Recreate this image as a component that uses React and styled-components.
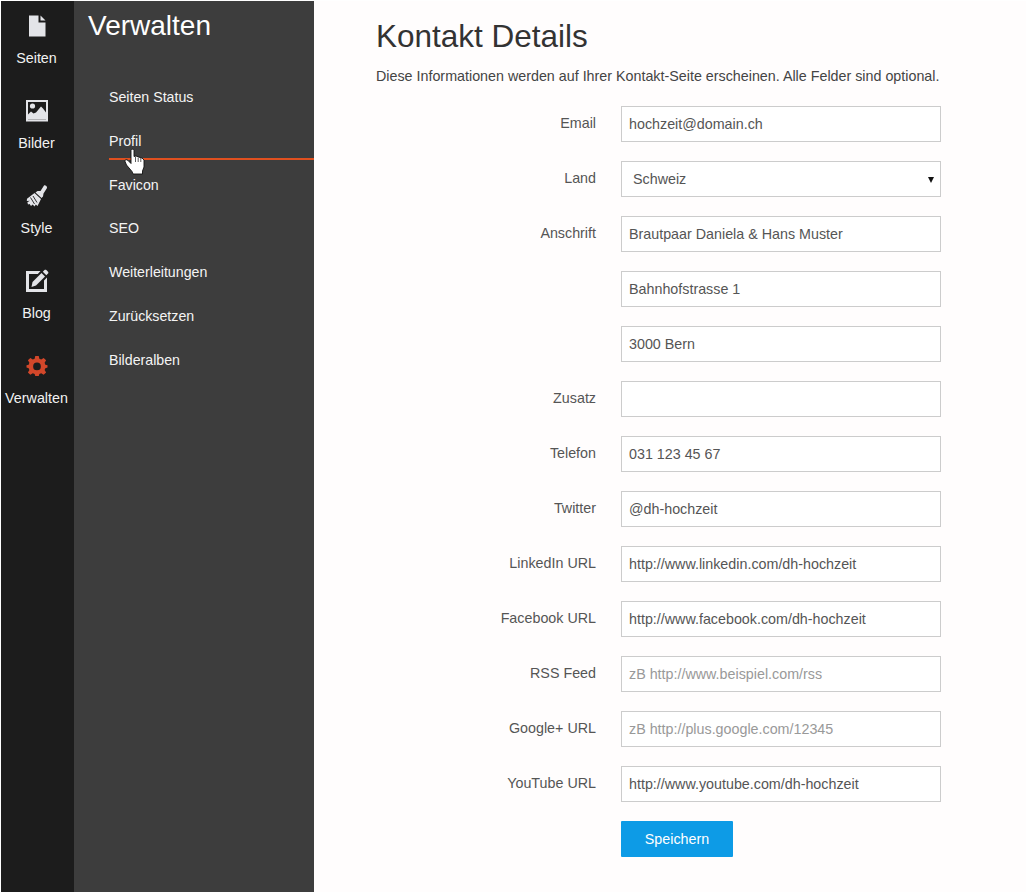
import React from 'react';
import styled, { createGlobalStyle } from 'styled-components';

const Global = createGlobalStyle`
  html, body {
    margin: 0;
    padding: 0;
    background: #fff;
  }
  body {
    font-family: "Liberation Sans", Arial, sans-serif;
  }
`;

const Page = styled.div`
  display: flex;
  height: 891px;
  padding: 1px 0 1px 1px;
  overflow: hidden;
`;

const IconBar = styled.nav`
  width: 73px;
  flex: none;
  box-sizing: border-box;
  padding-right: 2px;
  background: #1c1c1c;
  display: flex;
  flex-direction: column;
`;

const IconItem = styled.a`
  height: 85px;
  display: flex;
  flex-direction: column;
  align-items: center;
  padding-top: 13px;
  box-sizing: border-box;
  color: #f2f2f2;
  font-size: 14.3px;
  line-height: 16px;
  svg {
    display: block;
    width: 24px;
    height: 24px;
    margin-bottom: 12px;
    color: ${({ $active }) => ($active ? '#d2472a' : '#e3e4e8')};
  }
`;

const SubPanel = styled.aside`
  width: 240px;
  flex: none;
  background: #3d3d3d;
  color: #fff;
`;

const SubTitle = styled.h2`
  margin: 0;
  padding: 9px 0 0 14px;
  font-size: 28px;
  font-weight: 400;
  line-height: 32px;
`;

const SubList = styled.ul`
  list-style: none;
  margin: 33px 0 0;
  padding: 0 0 0 35px;
`;

const SubItem = styled.li`
  position: relative;
  height: 43.8px;
  line-height: 44px;
  font-size: 14.2px;
  color: #f4f4f4;
  ${({ $active }) =>
    $active &&
    `
    &::after {
      content: "";
      position: absolute;
      left: 0;
      right: 0;
      bottom: 3px;
      height: 2px;
      background: #e0501f;
    }
  `}
`;

const HandCursor = styled.svg`
  position: absolute;
  left: 15px;
  top: 29px;
  width: 21px;
  height: 27px;
  z-index: 1;
`;

const Main = styled.main`
  flex: 1;
  background: #fffdfd;
  padding: 15px 0 0 62px;
  color: #555;
`;

const Title = styled.h1`
  margin: 0;
  font-size: 31.5px;
  font-weight: 400;
  line-height: 40px;
  color: #333;
`;

const Intro = styled.p`
  margin: 10px 0 0;
  font-size: 14.3px;
  line-height: 20px;
  color: #444;
  white-space: nowrap;
`;

const Form = styled.form`
  margin-top: 20px;
  display: grid;
  grid-template-columns: 220px 320px;
  column-gap: 25px;
  row-gap: 19px;
  align-items: start;
`;

const FieldLabel = styled.label`
  text-align: right;
  font-size: 14.3px;
  line-height: 36px;
  height: 36px;
  margin-top: -1px;
  color: #555;
`;

const TextInput = styled.input`
  grid-column: 2;
  box-sizing: border-box;
  width: 320px;
  height: 36px;
  padding: 0 7px;
  border: 1px solid #ccc;
  border-radius: 0;
  background: #fff;
  outline: none;
  font: 14.3px "Liberation Sans", Arial, sans-serif;
  color: #555;
  &::placeholder {
    color: #999;
    opacity: 1;
  }
`;

const SelectWrap = styled.div`
  grid-column: 2;
  position: relative;
  width: 320px;
  height: 36px;
  &::after {
    content: "";
    position: absolute;
    right: 7px;
    top: 16px;
    border-left: 3px solid transparent;
    border-right: 3px solid transparent;
    border-top: 6px solid #111;
  }
`;

const Select = styled.select`
  appearance: none;
  box-sizing: border-box;
  width: 100%;
  height: 36px;
  padding: 0 11px;
  border: 1px solid #ccc;
  border-radius: 0;
  background: #fff;
  outline: none;
  font: 14.3px "Liberation Sans", Arial, sans-serif;
  color: #555;
`;

const SaveButton = styled.button`
  grid-column: 2;
  width: 112px;
  height: 36px;
  border: 0;
  border-radius: 1px;
  background: #0d9be6;
  color: #fff;
  font: 14.3px "Liberation Sans", Arial, sans-serif;
`;

const FileIcon = () => (
  <svg viewBox="0 0 24 24" fill="currentColor">
    <path d="M4 1.5H13.5V8.5H20.5V22.5H4Z" />
    <path d="M15.5 1.5L20.5 6.5H15.5Z" />
  </svg>
);

const ImageIcon = () => (
  <svg viewBox="0 0 24 24" fill="currentColor">
    <path fillRule="evenodd" d="M1 1H23V22.5H1ZM3 3V20.5H21V3Z" />
    <circle cx="7.5" cy="7" r="2.6" />
    <path d="M3 15.5L6 12.5L8.5 14.5L11 13.5L16 7.5L18 9.5L21 13.5V20.5H3Z" />
  </svg>
);

const BrushIcon = () => (
  <svg viewBox="0 0 24 24" fill="currentColor">
    <path d="M19 1.5C20 0.8 22.5 2.5 22 4L18.5 9.5L18 12.5L16.5 14L10.5 8.5L12.5 7L15.5 7Z" />
    <path fillRule="evenodd" d="M9.5 9L16 15L12.5 22L10.8 20.5L9.5 22.5L7.7 20.6L6 22L4.6 20L3 20.4L2.4 18.2L4.8 16.8L1.8 17L2 14.8Z" />
    <path d="M5.5 13.5L9.5 20M8 12L12 18.5" stroke="#1c1c1c" strokeWidth="0.9" fill="none" />
  </svg>
);

const EditIcon = () => (
  <svg viewBox="0 0 24 24" fill="currentColor">
    <path d="M1 2H15.5L12.8 5H4V20H19V11.5L22 8.5V23H1Z" />
    <path d="M7.5 13L16.5 4L20 7.5L11 16.5L6.5 18Z" />
    <path d="M17.8 2.7L19.5 1C20 0.5 20.8 0.5 21.3 1L23 2.7C23.5 3.2 23.5 4 23 4.5L21.3 6.2Z" />
  </svg>
);

const GearIcon = () => (
  <svg viewBox="0 0 24 24" fill="currentColor">
    <path
      fillRule="evenodd"
      d="M10 1H14L14.7 4.2L16.8 5.1L19.6 3.3L22.4 6.1L20.7 8.9L21.5 11L24 11.7V14.3L21.5 15L20.7 17.1L22.4 19.9L19.6 22.7L16.8 20.9L14.7 21.8L14 24H10L9.3 21.8L7.2 20.9L4.4 22.7L1.6 19.9L3.3 17.1L2.5 15L0 14.3V11.7L2.5 11L3.3 8.9L1.6 6.1L4.4 3.3L7.2 5.1L9.3 4.2ZM12 8.6A4.4 4.4 0 1 0 12 17.4A4.4 4.4 0 1 0 12 8.6Z"
      transform="translate(1.5 1) scale(0.875)"
    />
  </svg>
);

const mainNav = [
  { label: 'Seiten', icon: <FileIcon /> },
  { label: 'Bilder', icon: <ImageIcon /> },
  { label: 'Style', icon: <BrushIcon /> },
  { label: 'Blog', icon: <EditIcon /> },
  { label: 'Verwalten', icon: <GearIcon />, active: true },
];

const subNav = ['Seiten Status', 'Profil', 'Favicon', 'SEO', 'Weiterleitungen', 'Zurücksetzen', 'Bilderalben'];

const fields = [
  { label: 'Email', value: 'hochzeit@domain.ch' },
  { label: 'Land', select: 'Schweiz' },
  { label: 'Anschrift', value: 'Brautpaar Daniela & Hans Muster' },
  { value: 'Bahnhofstrasse 1' },
  { value: '3000 Bern' },
  { label: 'Zusatz', value: '' },
  { label: 'Telefon', value: '031 123 45 67' },
  { label: 'Twitter', value: '@dh-hochzeit' },
  { label: 'LinkedIn URL', value: 'http://www.linkedin.com/dh-hochzeit' },
  { label: 'Facebook URL', value: 'http://www.facebook.com/dh-hochzeit' },
  { label: 'RSS Feed', placeholder: 'zB http://www.beispiel.com/rss' },
  { label: 'Google+ URL', placeholder: 'zB http://plus.google.com/12345' },
  { label: 'YouTube URL', value: 'http://www.youtube.com/dh-hochzeit' },
];

const App = () => (
  <>
    <Global />
    <Page>
      <IconBar>
        {mainNav.map((item) => (
          <IconItem key={item.label} $active={item.active}>
            {item.icon}
            {item.label}
          </IconItem>
        ))}
      </IconBar>
      <SubPanel>
        <SubTitle>Verwalten</SubTitle>
        <SubList>
          {subNav.map((name) => (
            <SubItem key={name} $active={name === 'Profil'}>
              {name}
              {name === 'Profil' && (
                <HandCursor viewBox="0 0 21 27">
                  <path
                    d="M7 2.5C7 0.8 10 0.8 10 2.5V8.5L12 8L14 8.7L16 9.5L18 10L20 12V19L18.5 23V26H9L8 23.5L2.5 17L0.8 13C0.8 11.3 3 11.3 4 12.5L7 15.5Z"
                    fill="#fff"
                    stroke="#111"
                    strokeWidth="0.9"
                    strokeLinejoin="round"
                  />
                  <path d="M11.5 9V14M14.2 9.5V14M16.8 10V14" stroke="#333" strokeWidth="0.8" />
                </HandCursor>
              )}
            </SubItem>
          ))}
        </SubList>
      </SubPanel>
      <Main>
        <Title>Kontakt Details</Title>
        <Intro>Diese Informationen werden auf Ihrer Kontakt-Seite erscheinen. Alle Felder sind optional.</Intro>
        <Form>
          {fields.map((field, i) => (
            <React.Fragment key={i}>
              {field.label && <FieldLabel>{field.label}</FieldLabel>}
              {field.select ? (
                <SelectWrap>
                  <Select defaultValue={field.select}>
                    <option>{field.select}</option>
                  </Select>
                </SelectWrap>
              ) : (
                <TextInput defaultValue={field.value} placeholder={field.placeholder} />
              )}
            </React.Fragment>
          ))}
          <SaveButton type="button">Speichern</SaveButton>
        </Form>
      </Main>
    </Page>
  </>
);

export default App;
